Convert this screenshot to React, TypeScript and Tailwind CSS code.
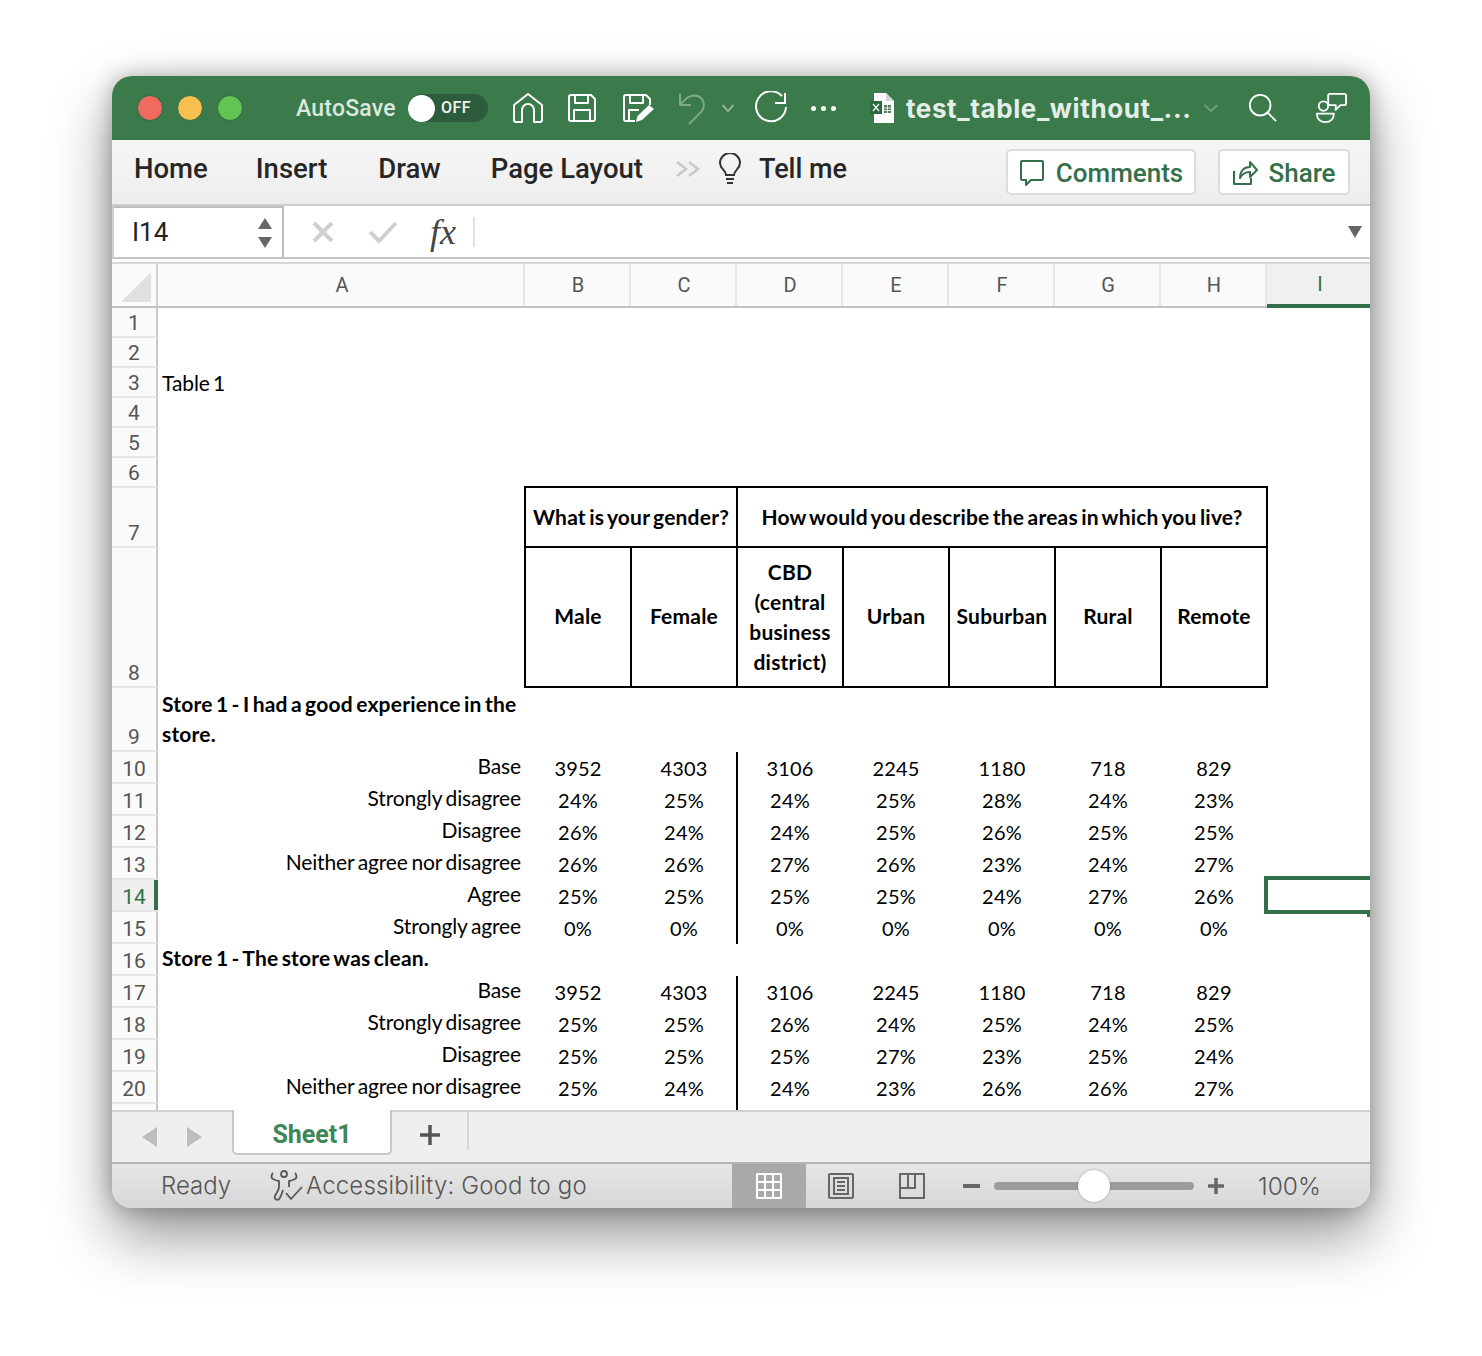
import React from "react";

const UI = "font-['Roboto',sans-serif]";
const CELL = "font-['Lato',sans-serif]";
const cols = ["B", "C", "D", "E", "F", "G", "H"];

const rowsA: [number, string, string[]][] = [
  [10, "Base", ["3952", "4303", "3106", "2245", "1180", "718", "829"]],
  [11, "Strongly disagree", ["24%", "25%", "24%", "25%", "28%", "24%", "23%"]],
  [12, "Disagree", ["26%", "24%", "24%", "25%", "26%", "25%", "25%"]],
  [13, "Neither agree nor disagree", ["26%", "26%", "27%", "26%", "23%", "24%", "27%"]],
  [14, "Agree", ["25%", "25%", "25%", "25%", "24%", "27%", "26%"]],
  [15, "Strongly agree", ["0%", "0%", "0%", "0%", "0%", "0%", "0%"]],
];
const rowsB: [number, string, string[]][] = [
  [17, "Base", ["3952", "4303", "3106", "2245", "1180", "718", "829"]],
  [18, "Strongly disagree", ["25%", "25%", "26%", "24%", "25%", "24%", "25%"]],
  [19, "Disagree", ["25%", "25%", "25%", "27%", "23%", "25%", "24%"]],
  [20, "Neither agree nor disagree", ["25%", "24%", "24%", "23%", "26%", "26%", "27%"]],
];

function RowNum({ n, active, className = "items-center pt-[2px]" }: { n?: number; active?: boolean; className?: string }) {
  return (
    <div
      className={`relative w-[46px] shrink-0 flex justify-center border-r-2 border-b-2 border-r-[#c9c9c9] border-b-[#e6e6e6] text-[21px] leading-[26px] ${UI} ${
        active ? "text-[#2f7146] bg-[#efefef]" : "text-[#555] bg-[#fafafa]"
      } ${className}`}
    >
      {active && <span className="absolute right-[-2px] top-0 bottom-0 w-[4px] bg-[#33704a]" />}
      {n}
    </div>
  );
}

function DataRow({ row, active }: { row: [number, string, string[]]; active?: boolean }) {
  const [n, label, vals] = row;
  return (
    <div className="flex h-[32px] shrink-0">
      <RowNum n={n} active={active} className="items-center pt-[4px]" />
      <div className={`w-[367px] shrink-0 text-right pr-[4px] text-[21px] leading-[28px] tracking-[-0.15px] [word-spacing:-1.500px] text-black ${CELL}`}>{label}</div>
      {vals.map((v, i) => (
        <div
          key={i}
          className={`shrink-0 text-center text-[20px] leading-[32px] tracking-[0.2px] text-black ${CELL} ${i === 2 ? "border-l-2 border-black -ml-[1px] w-[107px] pr-[1px]" : "w-[106px]"}`}
        >
          {v}
        </div>
      ))}
    </div>
  );
}

function EmptyRow({ n, text }: { n: number; text?: string }) {
  return (
    <div className="flex shrink-0 h-[30px]">
      <RowNum n={n} />
      <div className={`pl-[4px] text-[21px] leading-[30px] tracking-[-0.1px] [word-spacing:-2px] text-black ${CELL}`}>{text}</div>
    </div>
  );
}

function Head({ className = "", children }: { className?: string; children: React.ReactNode }) {
  return (
    <div className={`flex items-center justify-center text-center text-[21px] leading-[30px] font-bold tracking-[0.2px] [word-spacing:-2px] text-black border-black ${CELL} ${className}`}>
      {children}
    </div>
  );
}

function Home() {
  return (
    <svg width="30" height="32" viewBox="0 0 30 32" fill="none" stroke="#fff" strokeWidth="2" strokeLinejoin="round">
      <path d="M1 13 15 2l14 11v15a2 2 0 0 1-2 2h-6V18a6 6 0 0 0-12 0v12H3a2 2 0 0 1-2-2Z" />
    </svg>
  );
}
function Save() {
  return (
    <svg width="32" height="32" viewBox="0 0 32 32" fill="none" stroke="#fff" strokeWidth="2" strokeLinejoin="round">
      <path d="M3 5a2 2 0 0 1 2-2h20l4 4v20a2 2 0 0 1-2 2H5a2 2 0 0 1-2-2Z" />
      <path d="M9 3v8h13V3M8 29V18h16v11" />
    </svg>
  );
}
function SaveEdit() {
  return (
    <svg width="34" height="32" viewBox="0 0 34 32" fill="none" stroke="#fff" strokeWidth="2" strokeLinejoin="round">
      <path d="M14 29H5a2 2 0 0 1-2-2V5a2 2 0 0 1 2-2h20l4 4v6" />
      <path d="M9 3v8h13V3M8 29V18h10" />
      <path d="M15 30l1.500-6L28 13l5 4-12 11Z" fill="#fff" stroke="none" />
    </svg>
  );
}

export default function App() {
  return (
    <div className="min-h-[1356px] bg-white pt-[76px] pl-[112px]">
      <div className="w-[1258px] h-[1132px] flex flex-col overflow-hidden rounded-[20px] bg-white shadow-[0_28px_60px_rgba(0,0,0,0.42),0_0_22px_rgba(0,0,0,0.28)]">
        {/* title bar */}
        <div className={`h-[64px] shrink-0 flex items-center bg-[#3a7a4b] ${UI}`}>
          <div className="ml-[25px] flex gap-[14px]">
            <span className="w-[26px] h-[26px] rounded-full bg-[#ef6b60] border border-[#2f6a40]" />
            <span className="w-[26px] h-[26px] rounded-full bg-[#f6bf4f] border border-[#2f6a40]" />
            <span className="w-[26px] h-[26px] rounded-full bg-[#61c554] border border-[#2f6a40]" />
          </div>
          <span className="ml-[53px] pt-[2px] w-[101px] whitespace-nowrap text-[23px] tracking-[0.2px] font-medium text-[#dbe8de]">AutoSave</span>
          <div className="ml-[11px] w-[80px] h-[28px] rounded-full bg-[#2c5c3c] flex items-center">
            <span className="w-[27px] h-[27px] rounded-full bg-white" />
            <span className="ml-[6px] text-[16px] font-medium tracking-[0.5px] text-[#f0f5f1]">OFF</span>
          </div>
          <div className="ml-[25px] flex items-center gap-[23px]">
            <Home />
            <Save />
            <SaveEdit />
          </div>
          <svg className="ml-[22px]" width="30" height="34" viewBox="0 0 30 34" fill="none" stroke="#7fa98c" strokeWidth="2" strokeLinejoin="round">
            <path d="M3 3v11h11M3 14c6-8 12-11 18-9 6 3 8 10 3 16L12 33" />
          </svg>
          <svg className="ml-[14px]" width="14" height="10" viewBox="0 0 14 10" fill="none" stroke="#8eb39a" strokeWidth="2">
            <path d="M1.500 2 7 8l5.500-6" />
          </svg>
          <svg className="ml-[19px]" width="34" height="34" viewBox="0 0 34 34" fill="none" stroke="#fff" strokeWidth="2">
            <path d="M28 5a15 15 0 1 0 4 11M31 2v10H21" />
          </svg>
          <div className="ml-[23px] flex gap-[5px]">
            <span className="w-[5px] h-[5px] rounded-full bg-white" />
            <span className="w-[5px] h-[5px] rounded-full bg-white" />
            <span className="w-[5px] h-[5px] rounded-full bg-white" />
          </div>
          <svg className="ml-[34px]" width="24" height="30" viewBox="0 0 24 30">
            <path d="M4 0h12l8 8v22H4Z" fill="#fff" />
            <path d="M16 0l8 8h-8Z" fill="#cfd8d2" />
            <rect x="0" y="8" width="12" height="13" fill="#2b6a3f" />
            <path d="M3 11l6 7M9 11l-6 7" stroke="#fff" strokeWidth="1.300" />
            <path d="M14 12h7v8h-7Z" fill="#5a7d66" />
            <path d="M14 15h7M14 17.500h7M17.500 12v8" stroke="#fff" strokeWidth="0.800" />
          </svg>
          <span className="ml-[12px] w-[290px] text-[26px] font-bold font-['Inter',sans-serif] tracking-[0.6px] text-[#e4eee7] whitespace-nowrap">test_table_without_...</span>
          <svg className="ml-[7px]" width="16" height="10" viewBox="0 0 16 10" fill="none" stroke="#6b9f7c" strokeWidth="2">
            <path d="M1.500 2 8 8l6.500-6" />
          </svg>
          <svg className="ml-[29px]" width="30" height="30" viewBox="0 0 32 32" fill="none" stroke="#fff" strokeWidth="2">
            <circle cx="13" cy="13" r="11" />
            <path d="M21 21l9 9" />
          </svg>
          <svg className="ml-[37px]" width="32" height="32" viewBox="0 0 34 34" fill="none" stroke="#fff" strokeWidth="2" strokeLinejoin="round">
            <circle cx="9" cy="15" r="5" />
            <path d="M2 23h18c0 6-4 9-9 9s-9-3-9-9Z" />
            <path d="M16 2h15a2 2 0 0 1 2 2v8a2 2 0 0 1-2 2h-4l-5 5v-5h-6a2 2 0 0 1-2-2V4a2 2 0 0 1 2-2Z" />
          </svg>
        </div>

        {/* ribbon */}
        <div className={`h-[66px] shrink-0 flex items-start bg-gradient-to-b from-[#f6f6f6] to-[#ededed] border-b-2 border-[#cdcdcd] ${UI}`}>
          <div className="h-[58px] flex items-center text-[27.500px] font-medium text-[#262626]">
            <span className="ml-[22px]">Home</span>
            <span className="ml-[48px]">Insert</span>
            <span className="ml-[51px]">Draw</span>
            <span className="ml-[50px]">Page Layout</span>
          </div>
          <div className="h-[58px] flex items-center">
            <svg className="ml-[33px]" width="24" height="18" viewBox="0 0 24 18" fill="none" stroke="#c8c8c8" strokeWidth="2.500">
              <path d="M1 2l9 7-9 7M13 2l9 7-9 7" />
            </svg>
            <svg className="ml-[18px]" width="24" height="32" viewBox="0 0 24 32" fill="none" stroke="#333" strokeWidth="2">
              <path d="M8 22c0-5-6-6-6-12a10 10 0 0 1 20 0c0 6-6 7-6 12Z" />
              <path d="M8 26h8M9 30h6" />
            </svg>
            <span className="ml-[17px] text-[27px] font-medium text-[#262626]">Tell me</span>
          </div>
          <div className="ml-auto mt-[9px] mr-[20px] flex gap-[22px]">
            <div className="w-[190px] h-[46px] flex items-center justify-center gap-[11px] pt-[2px] rounded-[5px] border-2 border-[#dcdcdc] bg-white text-[26px] font-medium text-[#33704a]">
              <svg width="26" height="28" viewBox="0 0 26 28" fill="none" stroke="#33704a" strokeWidth="2" strokeLinejoin="round">
                <path d="M3 2h20a1 1 0 0 1 1 1v17a1 1 0 0 1-1 1H12l-5 5v-5H3a1 1 0 0 1-1-1V3a1 1 0 0 1 1-1Z" />
              </svg>
              Comments
            </div>
            <div className="w-[132px] h-[46px] flex items-center justify-center gap-[10px] pt-[2px] rounded-[5px] border-2 border-[#dcdcdc] bg-white text-[26px] font-medium text-[#33704a]">
              <svg width="26" height="26" viewBox="0 0 26 26" fill="none" stroke="#33704a" strokeWidth="2" strokeLinejoin="round">
                <path d="M2 11v13h17v-6" />
                <path d="M8 18c0-7 4-11 10-11V2l7 8-7 7v-5c-5 0-8 2-10 6Z" />
              </svg>
              Share
            </div>
          </div>
        </div>

        {/* formula bar */}
        <div className={`h-[53px] shrink-0 flex items-center bg-white border-b-2 border-[#c4c4c4] ${UI}`}>
          <div className="w-[172px] h-full shrink-0 flex items-center border-t-2 border-r-2 border-l-2 border-[#bdbdbd] border-l-[#d0d0d0]">
            <span className="ml-[18px] text-[26px] text-[#222]">I14</span>
            <div className="ml-auto mr-[10px] flex flex-col gap-[8px]">
              <span className="w-0 h-0 border-x-[7px] border-x-transparent border-b-[11px] border-b-[#666]" />
              <span className="w-0 h-0 border-x-[7px] border-x-transparent border-t-[11px] border-t-[#666]" />
            </div>
          </div>
          <svg className="ml-[27px]" width="24" height="24" viewBox="0 0 24 24" stroke="#cfcfcf" strokeWidth="4" fill="none">
            <path d="M3 3l18 18M21 3 3 21" />
          </svg>
          <svg className="ml-[33px]" width="30" height="24" viewBox="0 0 30 24" stroke="#cfcfcf" strokeWidth="4" fill="none">
            <path d="M2 12l9 9L28 3" />
          </svg>
          <span className="ml-[32px] w-[30px] font-['Liberation_Serif',serif] italic text-[36px] leading-none text-[#444]">fx</span>
          <span className="ml-[13px] w-[2px] h-[30px] bg-[#e2e2e2]" />
          <span className="ml-auto mr-[8px] w-0 h-0 border-x-[7px] border-x-transparent border-t-[12px] border-t-[#666]" />
        </div>

        {/* column header */}
        <div className={`mt-[3px] h-[46px] shrink-0 flex border-t-2 border-t-[#d8d8d8] border-b-2 border-b-[#c2c2c2] bg-[#fafafa] text-[20px] text-[#555] ${UI}`}>
          <div className="w-[46px] shrink-0 flex items-end justify-end pr-[5px] pb-[4px] border-r-2 border-[#d0d0d0]">
            <span className="w-0 h-0 border-l-[30px] border-l-transparent border-b-[30px] border-b-[#e0e0e0]" />
          </div>
          <div className="w-[367px] shrink-0 flex items-center justify-center pl-[3px] border-r-2 border-[#e6e6e6]">A</div>
          {cols.map((c) => (
            <div key={c} className="w-[106px] shrink-0 flex items-center justify-center pl-[2px] border-r-2 border-[#e6e6e6]">
              {c}
            </div>
          ))}
          <div className="flex-1 flex items-center justify-center pl-[3px] bg-[#f0f0f0] text-[#2f7146] border-b-4 -mb-[2px] border-[#33704a]">I</div>
        </div>

        {/* sheet */}
        <div className="relative h-[802px] shrink-0 overflow-hidden">
          {[1, 2].map((n) => (
            <EmptyRow key={n} n={n} />
          ))}
          <EmptyRow n={3} text="Table 1" />
          {[4, 5, 6].map((n) => (
            <EmptyRow key={n} n={n} />
          ))}
          <div className="flex h-[60px]">
            <RowNum n={7} className="items-end" />
            <div className="w-[367px] shrink-0" />
            <Head className="w-[214px] h-[62px] -mt-[2px] border-2 -ml-[1px]">What is your gender?</Head>
            <Head className="w-[530px] h-[62px] -mt-[2px] border-2 border-l-0">How would you describe the areas in which you live?</Head>
          </div>
          <div className="flex h-[140px]">
            <RowNum n={8} className="items-end" />
            <div className="w-[367px] shrink-0" />
            <div className="flex -ml-[1px] border-x-2 border-b-2 border-black">
              {["Male", "Female"].map((t) => (
                <Head key={t} className="w-[106px] border-r-2 pb-[2px]">
                  {t}
                </Head>
              ))}
              <Head className="w-[106px] border-r-2">
                <span>
                  CBD
                  <br />
                  (central
                  <br />
                  business
                  <br />
                  district)
                </span>
              </Head>
              {["Urban", "Suburban", "Rural"].map((t) => (
                <Head key={t} className="w-[106px] border-r-2 pb-[2px]">
                  {t}
                </Head>
              ))}
              <Head className="w-[104px] pb-[2px]">Remote</Head>
            </div>
          </div>
          <div className="flex h-[64px]">
            <RowNum n={9} className="items-end leading-[24px]" />
            <div className={`w-[367px] shrink-0 pl-[4px] pt-[1px] text-[21px] leading-[30px] font-bold tracking-[0.2px] [word-spacing:-2px] text-black ${CELL}`}>
              Store 1 - I had a good experience in the store.
            </div>
          </div>
          {rowsA.map((r) => (
            <DataRow key={r[0]} row={r} active={r[0] === 14} />
          ))}
          <div className="flex h-[32px]">
            <RowNum n={16} className="items-center pt-[4px]" />
            <div className={`pl-[4px] text-[21px] leading-[28px] font-bold tracking-[0.2px] [word-spacing:-2px] text-black ${CELL}`}>Store 1 - The store was clean.</div>
          </div>
          {rowsB.map((r) => (
            <DataRow key={r[0]} row={r} />
          ))}
          <div className="flex h-[32px]">
            <RowNum />
            <div className="ml-[578px] w-[2px] bg-black" />
          </div>
          {/* selected cell */}
          <div className="absolute left-[1152px] top-[568px] w-[106px] h-[38px] border-y-4 border-l-4 border-[#33704a]">
            <span className="absolute right-0 bottom-[-4px] w-[3px] h-[4px] bg-white" />
            <span className="absolute right-[-0px] bottom-[-7px] w-[3px] h-[7px] bg-[#33704a]" />
          </div>
        </div>

        {/* tab bar */}
        <div className={`h-[54px] shrink-0 flex items-start bg-[#efefef] border-t-2 border-[#d2d2d2] border-b-2 border-b-[#b4b4b4] ${UI}`}>
          <span className="ml-[30px] mt-[15px] w-0 h-0 border-y-[10px] border-y-transparent border-r-[15px] border-r-[#bdbdbd]" />
          <span className="ml-[30px] mt-[15px] w-0 h-0 border-y-[10px] border-y-transparent border-l-[15px] border-l-[#bdbdbd]" />
          <div className="ml-[30px] -mt-[2px] w-[160px] h-[45px] flex items-center justify-center pt-[7px] rounded-b-[5px] bg-white border-x-2 border-b-2 border-[#c8c8c8] text-[25px] font-bold text-[#3d8656]">
            Sheet1
          </div>
          <svg className="ml-[27px] mt-[12px]" width="22" height="22" viewBox="0 0 22 22" stroke="#555" strokeWidth="3.500">
            <path d="M11 1v20M1 11h20" />
          </svg>
          <span className="ml-[26px] w-[2px] h-[38px] bg-[#d6d6d6]" />
        </div>

        {/* status bar */}
        <div className={`flex-1 flex items-center bg-gradient-to-b from-[#e6e6e6] to-[#d7d7d7] text-[25px] text-[#555] ${UI}`}>
          <span className="ml-[49px] w-[85px] font-['Inter',sans-serif] font-light text-[24px]">Ready</span>
          <svg className="ml-[23px]" width="34" height="32" viewBox="0 0 34 32" fill="none" stroke="#555" strokeWidth="1.800" strokeLinejoin="round">
            <circle cx="15" cy="4" r="3" />
            <path d="M4 3C2 5 2 8 4 9c2 1 5 2 6 2v6c0 4-3 6-4 9-1 3 2 5 4 3 2-2 3-6 4-9M26 3c2 2 2 5 0 6-2 1-5 2-6 2v6" />
            <path d="M17 23l5 6 11-12" />
          </svg>
          <span className="ml-[3px] w-[426px] font-['Inter',sans-serif] font-light text-[24px] tracking-[0.15px] whitespace-nowrap">Accessibility: Good to go</span>
          <div className="w-[74px] self-stretch flex items-center justify-center bg-[#a9a9a9]">
            <svg width="26" height="26" viewBox="0 0 26 26" fill="#fff">
              <path fillRule="evenodd" d="M0 1a1 1 0 0 1 1-1h24a1 1 0 0 1 1 1v24a1 1 0 0 1-1 1H1a1 1 0 0 1-1-1Zm2 1v6h6V2Zm8 0v6h6V2Zm8 0v6h6V2ZM2 10v6h6v-6Zm8 0v6h6v-6Zm8 0v6h6v-6ZM2 18v6h6v-6Zm8 0v6h6v-6Zm8 0v6h6v-6Z" />
            </svg>
          </div>
          <svg className="ml-[22px]" width="26" height="26" viewBox="0 0 26 26" fill="none" stroke="#666" strokeWidth="2">
            <rect x="1" y="1" width="24" height="24" rx="1" />
            <rect x="6" y="5" width="14" height="16" />
            <path d="M9 9h8M9 13h8M9 17h8" />
          </svg>
          <svg className="ml-[45px]" width="26" height="26" viewBox="0 0 26 26" fill="none" stroke="#666" strokeWidth="2">
            <rect x="1" y="1" width="24" height="24" />
            <path d="M1 15h15V1M9 1v14" />
          </svg>
          <span className="ml-[38px] w-[17px] h-[4px] bg-[#666]" />
          <div className="relative ml-[14px] w-[200px] h-[8px] rounded-full bg-[#9c9c9c]">
            <span className="absolute left-[84px] top-[-12px] w-[32px] h-[32px] rounded-full bg-white shadow-[0_0_2px_rgba(0,0,0,0.4)]" />
          </div>
          <svg className="ml-[14px]" width="16" height="16" viewBox="0 0 16 16" stroke="#666" strokeWidth="3.500">
            <path d="M8 0v16M0 8h16" />
          </svg>
          <span className="ml-[34px] font-['Inter',sans-serif] font-light text-[24.500px]">100%</span>
        </div>
      </div>
    </div>
  );
}
